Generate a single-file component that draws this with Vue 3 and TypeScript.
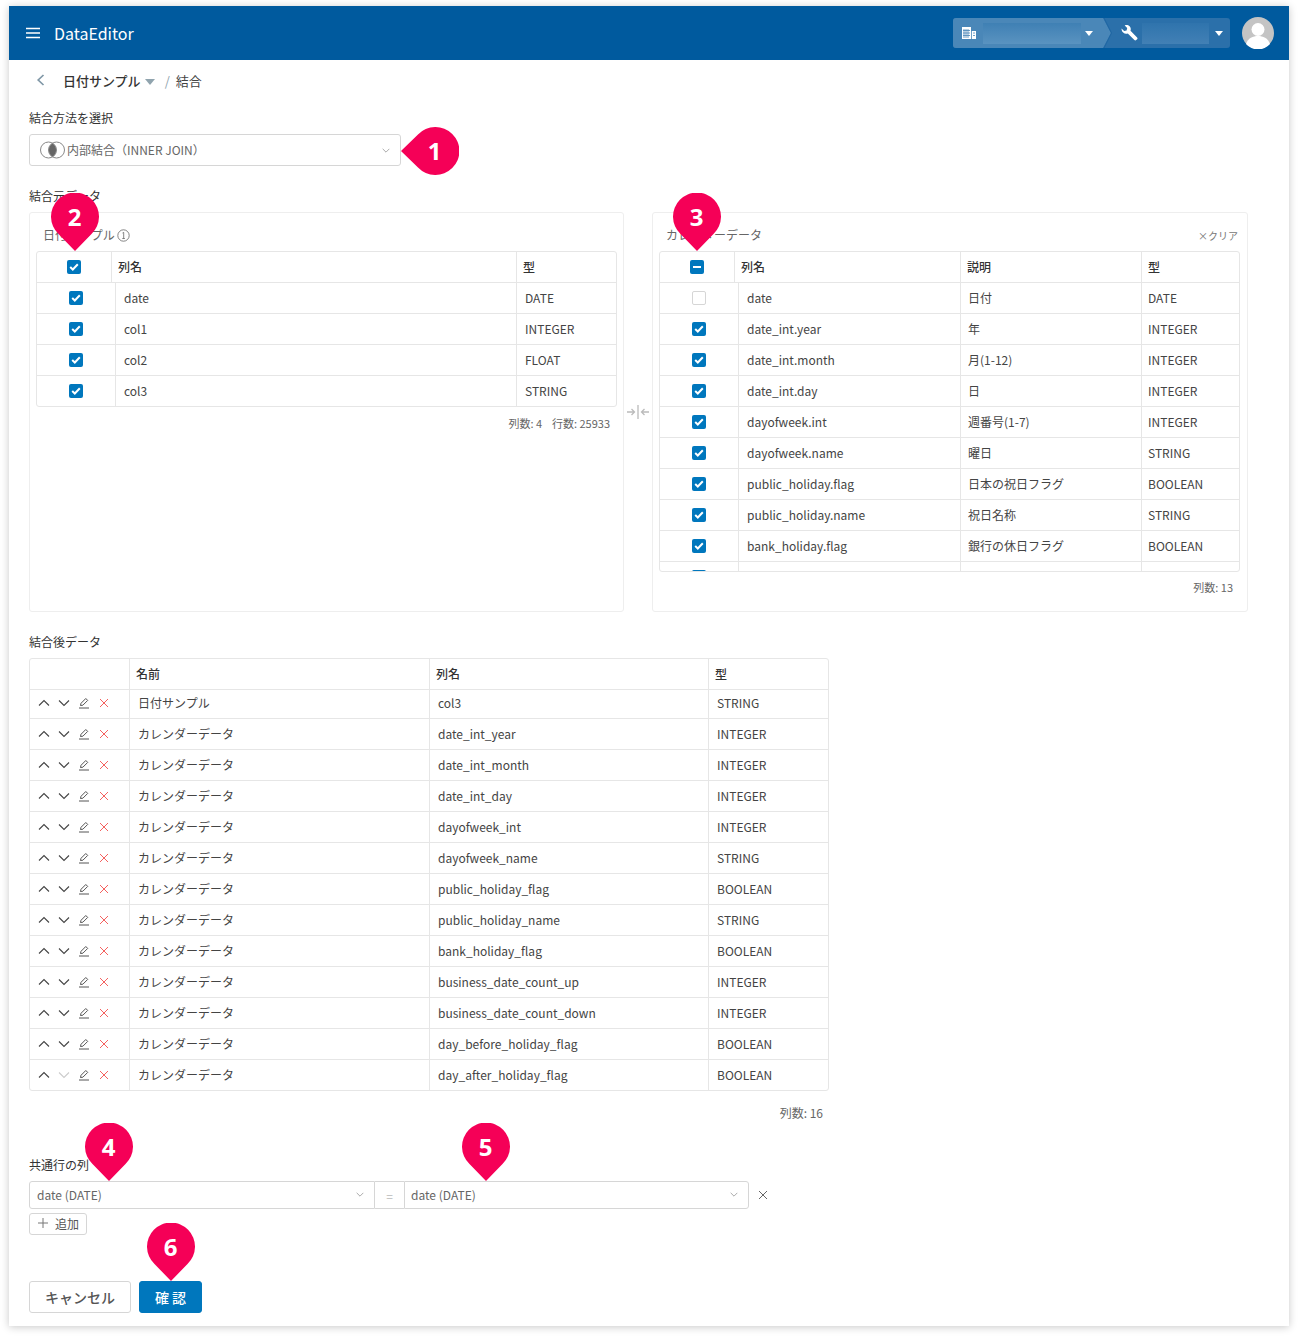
<template>
  <div class="window">
    <header class="topbar">
      <svg class="menu" width="14" height="12" viewBox="0 0 14 12"><path d="M0 1.500h14M0 6h14M0 10.500h14" stroke="#fff" stroke-width="1.300" fill="none" /></svg>
      <span class="app-name">DataEditor</span>
      <div class="crumbs">
        <div class="crumb crumb--org">
          <svg width="14" height="12" viewBox="0 0 14 12" fill="#fff"><path d="M0 0h9v12H0zM9.800 4H14v8H9.800z" /><path d="M2 2v9M4 2v9M6 2v9M1 3.500h7M1 6h7M1 8.500h7M11 6h2M11 8.500h2" stroke="#4a87b8" stroke-width=".8" /></svg>
          <span class="blur blur--org"></span>
          <i class="caret"></i>
        </div>
        <div class="crumb crumb--tool">
          <svg width="18" height="18" viewBox="0 0 18 18" fill="#fff"><path d="M1.500 4.500 4.200 7 6.600 6.400 7.200 4 4.700 1.400C6.400.7 8.400 1 9.600 2.300c1.200 1.200 1.500 3 .9 4.500l6.600 6.600c.5.500.5 1.300 0 1.800l-.9.900c-.5.500-1.300.5-1.800 0L7.800 9.500C6.300 10.100 4.400 9.800 3.200 8.600 1.900 7.400 1.500 5.900 1.500 4.500z" /></svg>
          <span class="blur blur--tool"></span>
          <i class="caret"></i>
        </div>
        <svg class="crumb-edge" width="10" height="30" viewBox="0 0 10 30"><path d="M1 0 8.500 15 1 30" stroke="#1f66a3" fill="none" /></svg>
      </div>
      <svg class="avatar" width="32" height="32" viewBox="0 0 32 32"><circle cx="16" cy="16" r="16" fill="#c4c4c4" /><circle cx="16" cy="12.500" r="6.500" fill="#fff" /><path d="M4 27c2-6 7-8 12-8s10 2 12 8a16 16 0 0 1-24 0z" fill="#fff" /></svg>
    </header>

    <main class="content">
      <nav class="breadcrumb">
        <svg width="9" height="12" viewBox="0 0 9 12"><path d="M7.500 1 2.200 6l5.300 5" stroke="#7f97a6" stroke-width="1.700" fill="none" /></svg>
        <b>日付サンプル</b>
        <i class="bc-caret"></i>
        <span class="bc-sep">/</span>
        <span>結合</span>
      </nav>

      <div class="label label--method">結合方法を選択</div>
      <div class="select select--method">
        <svg width="25" height="18" viewBox="0 0 25 18">
          <path d="M12.500 2.200a8 8 0 0 1 0 13.600 8 8 0 0 1 0-13.600z" fill="#666" />
          <circle cx="8.500" cy="9" r="8" fill="none" stroke="#888" />
          <circle cx="16.500" cy="9" r="8" fill="none" stroke="#888" />
        </svg>
        <span>内部結合（INNER JOIN）</span>
        <svg class="chev" width="8" height="5" viewBox="0 0 9 6"><path d="M.5 1 4.500 5l4-4" stroke="#999" fill="none" /></svg>
      </div>

      <div class="label label--source">結合元データ</div>
      <section class="sources">
        <div class="panel">
          <div class="panel-head">
            <span>日付サンプル</span>
            <svg class="info" width="13" height="13" viewBox="0 0 13 13"><circle cx="6.500" cy="6.500" r="5.700" fill="none" stroke="#666" stroke-width=".8" /><path d="M5.500 4 6.700 3.400V9.500M5.300 9.500h2.600" stroke="#666" stroke-width=".8" fill="none" /></svg>
          </div>
          <div class="tbl">
            <div class="row row--head cols-left">
              <div class="cell cell--check"><span class="check"><svg width="10" height="8" viewBox="0 0 10 8"><path d="M1.200 4 3.800 6.500 8.800 1.300" stroke="#fff" stroke-width="2" fill="none" /></svg></span></div>
              <div class="cell">列名</div>
              <div class="cell">型</div>
            </div>
            <div v-for="r in leftRows" :key="r.name" class="row cols-left-body">
              <div class="cell cell--check"><span class="check"><svg width="10" height="8" viewBox="0 0 10 8"><path d="M1.200 4 3.800 6.500 8.800 1.300" stroke="#fff" stroke-width="2" fill="none" /></svg></span></div>
              <div class="cell cell--body">{{ r.name }}</div>
              <div class="cell cell--body">{{ r.type }}</div>
            </div>
          </div>
          <div class="count count--left">列数: 4&nbsp;&nbsp;&nbsp;&nbsp;行数: 25933</div>
        </div>

        <div class="merge-icon">
          <svg width="24" height="14" viewBox="0 0 24 14"><path d="M1 7h7M5.500 4 8.500 7l-3 3M12 0v14M23 7h-7M18.500 4l-3 3 3 3" stroke="#bbb" stroke-width="1.300" fill="none" /></svg>
        </div>

        <div class="panel panel--right">
          <div class="panel-head">
            <span>カレンダーデータ</span>
            <span class="clear">×クリア</span>
          </div>
          <div class="tbl tbl--clip">
            <div class="row row--head cols-right">
              <div class="cell cell--check"><span class="check"><i class="dash"></i></span></div>
              <div class="cell">列名</div>
              <div class="cell">説明</div>
              <div class="cell">型</div>
            </div>
            <div v-for="(r, i) in rightRows" :key="i" class="row cols-right-body">
              <div class="cell cell--check">
                <span class="check" :class="{ 'check--off': !r.on }"><svg v-if="r.on" width="10" height="8" viewBox="0 0 10 8"><path d="M1.200 4 3.800 6.500 8.800 1.300" stroke="#fff" stroke-width="2" fill="none" /></svg></span>
              </div>
              <div class="cell cell--body">{{ r.name }}</div>
              <div class="cell cell--body">{{ r.desc }}</div>
              <div class="cell cell--body">{{ r.type }}</div>
            </div>
          </div>
          <div class="count count--right">列数: 13</div>
        </div>
      </section>

      <div class="label label--result">結合後データ</div>
      <div class="tbl tbl--result">
        <div class="row row--head cols-result">
          <div class="cell"></div>
          <div class="cell">名前</div>
          <div class="cell">列名</div>
          <div class="cell">型</div>
        </div>
        <div v-for="(r, i) in resultRows" :key="r.col" class="row cols-result" :class="{ 'row--first': i === 0 }">
          <div class="cell cell--actions">
            <svg width="12" height="8" viewBox="0 0 12 8"><path d="M1 6.500 6 1.500l5 5" stroke="#444" stroke-width="1.100" fill="none" /></svg>
            <svg width="12" height="8" viewBox="0 0 12 8"><path d="M1 1.500 6 6.500l5-5" :stroke="i === resultRows.length - 1 ? '#ccc' : '#444'" stroke-width="1.100" fill="none" /></svg>
            <svg width="12" height="12" viewBox="0 0 12 12"><path d="M2.500 8.500 3 6.300 7.800 1.500 9.700 3.400 4.900 8.200zM1 11h10" stroke="#555" fill="none" /></svg>
            <svg class="del" width="10" height="10" viewBox="0 0 10 10"><path d="M1 1l8 8M9 1 1 9" stroke="#f4615e" fill="none" /></svg>
          </div>
          <div class="cell cell--name">{{ r.name }}</div>
          <div class="cell cell--name">{{ r.col }}</div>
          <div class="cell cell--name">{{ r.type }}</div>
        </div>
      </div>
      <div class="count count--result">列数: 16</div>

      <div class="label label--common">共通行の列</div>
      <div class="join-row">
        <div class="join-select">
          <span>date (DATE)</span>
          <svg class="chev" width="8" height="5" viewBox="0 0 9 6"><path d="M.5 1 4.500 5l4-4" stroke="#999" fill="none" /></svg>
        </div>
        <div class="join-eq">=</div>
        <div class="join-select join-select--right">
          <span>date (DATE)</span>
          <svg class="chev" width="8" height="5" viewBox="0 0 9 6"><path d="M.5 1 4.500 5l4-4" stroke="#999" fill="none" /></svg>
        </div>
        <svg class="join-x" width="10" height="10" viewBox="0 0 10 10"><path d="M1 1l8 8M9 1 1 9" stroke="#666" fill="none" /></svg>
      </div>
      <button class="add"><svg width="10" height="10" viewBox="0 0 10 10"><path d="M5 0v10M0 5h10" stroke="#777" fill="none" /></svg>追加</button>

      <div class="actions">
        <button class="btn">キャンセル</button>
        <button class="btn btn--primary">確 認</button>
      </div>
    </main>

    <div v-for="p in pins" :key="p.n" class="pin" :class="{ 'pin--left': p.left }" :style="{ left: p.x + 'px', top: p.y + 'px' }">
      <svg v-if="p.left" width="58" height="48" viewBox="0 0 58 48"><path d="M0 24 17 7.500A24 24 0 1 1 17 40.500z" fill="#f50057" /></svg>
      <svg v-else width="48" height="58" viewBox="0 0 48 58"><path d="M24 58 7.500 41A24 24 0 1 1 40.500 41z" fill="#f50057" /></svg>
      <span class="pin-num">{{ p.n }}</span>
    </div>
  </div>
</template>

<script setup lang="ts">
const leftRows = [
  { name: 'date', type: 'DATE' },
  { name: 'col1', type: 'INTEGER' },
  { name: 'col2', type: 'FLOAT' },
  { name: 'col3', type: 'STRING' },
]

// the last row is cut off by the scroll area, only its checkbox top shows
const rightRows = [
  { name: 'date', desc: '日付', type: 'DATE', on: false },
  { name: 'date_int.year', desc: '年', type: 'INTEGER', on: true },
  { name: 'date_int.month', desc: '月(1-12)', type: 'INTEGER', on: true },
  { name: 'date_int.day', desc: '日', type: 'INTEGER', on: true },
  { name: 'dayofweek.int', desc: '週番号(1-7)', type: 'INTEGER', on: true },
  { name: 'dayofweek.name', desc: '曜日', type: 'STRING', on: true },
  { name: 'public_holiday.flag', desc: '日本の祝日フラグ', type: 'BOOLEAN', on: true },
  { name: 'public_holiday.name', desc: '祝日名称', type: 'STRING', on: true },
  { name: 'bank_holiday.flag', desc: '銀行の休日フラグ', type: 'BOOLEAN', on: true },
  { name: '', desc: '', type: '', on: true },
]

const cal = 'カレンダーデータ'
const resultRows = [
  { name: '日付サンプル', col: 'col3', type: 'STRING' },
  { name: cal, col: 'date_int_year', type: 'INTEGER' },
  { name: cal, col: 'date_int_month', type: 'INTEGER' },
  { name: cal, col: 'date_int_day', type: 'INTEGER' },
  { name: cal, col: 'dayofweek_int', type: 'INTEGER' },
  { name: cal, col: 'dayofweek_name', type: 'STRING' },
  { name: cal, col: 'public_holiday_flag', type: 'BOOLEAN' },
  { name: cal, col: 'public_holiday_name', type: 'STRING' },
  { name: cal, col: 'bank_holiday_flag', type: 'BOOLEAN' },
  { name: cal, col: 'business_date_count_up', type: 'INTEGER' },
  { name: cal, col: 'business_date_count_down', type: 'INTEGER' },
  { name: cal, col: 'day_before_holiday_flag', type: 'BOOLEAN' },
  { name: cal, col: 'day_after_holiday_flag', type: 'BOOLEAN' },
]

// pin offsets are relative to the window
const pins = [
  { n: 1, x: 392, y: 121, left: true },
  { n: 2, x: 42, y: 187 },
  { n: 3, x: 664, y: 187 },
  { n: 4, x: 76, y: 1117 },
  { n: 5, x: 453, y: 1117 },
  { n: 6, x: 138, y: 1217 },
]
</script>

<style>
html,
body {
  margin: 0;
  background: #fff;
}
</style>

<style scoped>
.window {
  position: relative;
  width: 1280px;
  height: 1320px;
  margin: 6px 9px 12px;
  background: #fff;
  box-shadow: 0 1px 8px rgba(0, 0, 0, 0.22);
  font-family: "Noto Sans CJK JP", "Noto Sans", sans-serif;
  font-size: 12px;
  color: #444;
}

.topbar {
  height: 54px;
  background: #005a9e;
  display: flex;
  align-items: center;
  padding: 0 15px 0 17px;
  color: #fff;
}

.app-name {
  margin-left: 14px;
  font-size: 16px;
}

.crumbs {
  position: relative;
  margin-left: auto;
  width: 277px;
  height: 30px;
  border-radius: 3px;
  background: #2b70aa;
  display: flex;
  overflow: hidden;
}

.crumb {
  display: flex;
  align-items: center;
  box-sizing: border-box;
  padding-left: 9px;
}

.crumb--org {
  width: 158px;
  flex: none;
  background: #4a87b8;
  clip-path: polygon(0 0, 150px 0, 158px 50%, 150px 100%, 0 100%);
}

.crumb--tool {
  flex: 1;
}

.crumb-edge {
  position: absolute;
  left: 150px;
  top: 0;
}

.blur {
  display: block;
  height: 21px;
}

.blur--org {
  width: 98px;
  margin-left: 7px;
  background-image: linear-gradient(#3f80b4, #5a93c0);
}

.blur--tool {
  width: 67px;
  margin-left: 4px;
  background-image: linear-gradient(#2f74ad, #4280b5);
}

.caret {
  width: 0;
  height: 0;
  border: 4.500px solid transparent;
  border-top: 5px solid #fff;
  border-bottom: 0;
}

.crumb--org .caret {
  margin-left: 4px;
}

.crumb--tool .caret {
  margin-left: 6px;
}

.avatar {
  margin-left: 12px;
}

.content {
  padding: 0 20px;
}

.breadcrumb {
  height: 44px;
  box-sizing: border-box;
  padding: 0 0 4px 7px;
  display: flex;
  align-items: center;
  font-size: 13px;
}

.breadcrumb b {
  margin-left: 18px;
  font-weight: 500;
  color: #333;
}

.bc-caret {
  width: 0;
  height: 0;
  margin: 4px 0 0 4px;
  border: 5px solid transparent;
  border-top: 6px solid #90a4ae;
  border-bottom: 0;
}

.bc-sep {
  margin: 0 6px 0 10px;
  color: #90a4ae;
}

.label {
  font-size: 12px;
  line-height: 16px;
  color: #333;
}

.label--method {
  margin-top: 6px;
}

.select {
  width: 372px;
  height: 32px;
  margin-top: 8px;
  box-sizing: border-box;
  border: 1px solid #d6d6d6;
  border-radius: 3px;
  display: flex;
  align-items: center;
  padding: 0 10px;
  color: #666;
}

.select span {
  margin: 0 0 2px 2px;
}

.chev {
  margin-left: auto;
  flex: none;
}

.label--source {
  margin-top: 22px;
}

.sources {
  margin-top: 8px;
  display: flex;
  align-items: stretch;
}

.panel {
  width: 595px;
  height: 400px;
  box-sizing: border-box;
  padding: 0 6px;
  border: 1px solid #eee;
  border-radius: 3px;
}

.panel--right {
  width: 596px;
  padding-right: 7px;
}

.panel-head {
  height: 38px;
  padding: 5px 2px 0 7px;
  box-sizing: border-box;
  display: flex;
  align-items: center;
  color: #666;
}

.info {
  margin: 2px 0 0 2px;
}

.clear {
  margin: 2px 0 0 auto;
  font-size: 10px;
  color: #777;
}

.merge-icon {
  width: 28px;
  flex: none;
  padding-top: 193px;
  box-sizing: border-box;
  display: flex;
  justify-content: center;
}

.merge-icon svg {
  height: 14px;
}

.tbl {
  border: 1px solid #e6e6e6;
  border-radius: 3px;
  background: #fff;
  overflow: hidden;
}

.tbl--clip {
  height: 321px;
  box-sizing: border-box;
}

.row {
  display: grid;
  height: 31px;
  box-sizing: border-box;
  border-top: 1px solid #e6e6e6;
}

.row:first-child {
  border-top: 0;
  height: 30px;
}

.row--head {
  font-weight: 500;
  color: #333;
}

.row--first {
  height: 29px;
}

.cols-left {
  grid-template-columns: 74px 405px 1fr;
}

.cols-left-body {
  grid-template-columns: 78px 401px 1fr;
}

.cols-right {
  grid-template-columns: 74px 226px 181px 1fr;
}

.cols-right-body {
  grid-template-columns: 78px 222px 181px 1fr;
}

.cols-result {
  grid-template-columns: 99px 300px 279px 1fr;
}

.cell {
  display: flex;
  align-items: center;
  padding: 0 6px 2px;
  border-left: 1px solid #e6e6e6;
  min-width: 0;
}

.cell:first-child {
  border-left: 0;
}

.cell--check {
  justify-content: center;
  padding: 0;
}

.cell--body {
  padding-left: 8px;
}

.cols-right-body .cell:nth-child(3) {
  padding-left: 7px;
}

.cols-right-body .cell:nth-child(4) {
  padding-left: 6px;
}

.cell--name {
  padding-left: 8px;
}

.row--first .cell--name {
  padding-bottom: 4px;
}

.cell--actions {
  gap: 8px;
  padding: 0 0 0 8px;
}

.row--first .cell--actions {
  padding-bottom: 2px;
}

.del {
  margin-left: 1px;
}

.check {
  width: 14px;
  height: 14px;
  box-sizing: border-box;
  border-radius: 2px;
  background: #0077bd;
  display: flex;
  align-items: center;
  justify-content: center;
}

.check--off {
  background: #fff;
  border: 1px solid #d6d6d6;
}

.dash {
  width: 8px;
  height: 2px;
  background: #fff;
}

.count {
  padding-right: 7px;
  text-align: right;
  font-size: 11px;
  line-height: 16px;
  color: #666;
}

.count--left {
  margin-top: 8px;
}

.count--right {
  margin-top: 7px;
}

.label--result {
  margin-top: 22px;
}

.tbl--result {
  width: 800px;
  box-sizing: border-box;
  margin-top: 8px;
}

.count--result {
  width: 800px;
  box-sizing: border-box;
  margin-top: 14px;
  padding-right: 6px;
  font-size: 12px;
}

.label--common {
  margin-top: 36px;
}

.join-row {
  margin-top: 8px;
  height: 28px;
  display: flex;
  align-items: center;
}

.join-select {
  width: 346px;
  height: 28px;
  box-sizing: border-box;
  border: 1px solid #d6d6d6;
  border-radius: 3px 0 0 3px;
  display: flex;
  align-items: center;
  padding: 0 10px 2px 7px;
  color: #666;
}

.join-select--right {
  width: 345px;
  padding-left: 6px;
  border-radius: 0 3px 3px 0;
}

.join-eq {
  width: 29px;
  height: 28px;
  box-sizing: border-box;
  border-top: 1px solid #d6d6d6;
  border-bottom: 1px solid #d6d6d6;
  display: flex;
  align-items: center;
  justify-content: center;
  color: #bbb;
}

.join-x {
  margin-left: 9px;
}

.add {
  display: flex;
  align-items: center;
  gap: 7px;
  width: 58px;
  height: 22px;
  margin-top: 4px;
  padding: 0 0 2px 8px;
  box-sizing: border-box;
  border: 1px solid #d6d6d6;
  border-radius: 3px;
  background: #fff;
  font: inherit;
  color: #555;
}

.actions {
  margin-top: 46px;
  display: flex;
  gap: 8px;
}

.btn {
  width: 102px;
  height: 32px;
  border: 1px solid #d6d6d6;
  border-radius: 3px;
  background: #fff;
  font: inherit;
  font-size: 14px;
  font-weight: 500;
  color: #555;
  padding: 0;
}

.btn--primary {
  width: 63px;
  border-color: #0077bd;
  background: #0077bd;
  color: #fff;
}

.pin {
  position: absolute;
  width: 48px;
  height: 58px;
}

.pin--left {
  width: 58px;
  height: 48px;
}

.pin svg {
  display: block;
}

.pin-num {
  position: absolute;
  top: 0;
  left: 0;
  width: 47px;
  height: 47px;
  display: flex;
  align-items: center;
  justify-content: center;
  font-family: "Noto Sans", sans-serif;
  font-size: 24px;
  font-weight: 700;
  color: #fff;
}

.pin--left .pin-num {
  left: 10px;
}
</style>
